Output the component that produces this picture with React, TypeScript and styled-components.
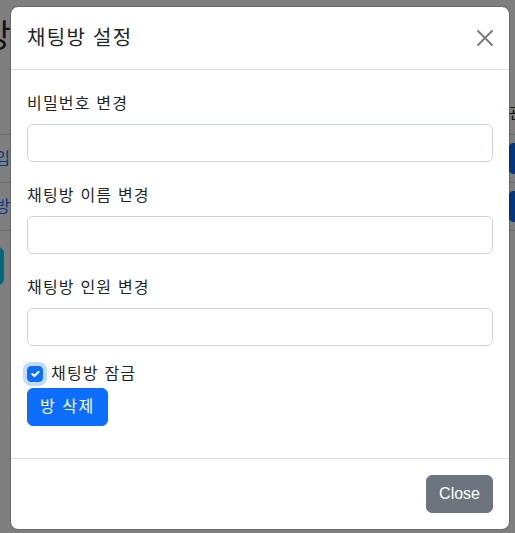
import React from 'react';
import styled, { createGlobalStyle } from 'styled-components';

const GlobalStyle = createGlobalStyle`
  html, body {
    margin: 0;
    padding: 0;
  }
  body {
    font-family: "Liberation Sans", "Noto Sans CJK KR", sans-serif;
    font-size: 16px;
    line-height: 1.5;
    color: #212529;
    background: #fff;
  }
  * {
    box-sizing: border-box;
  }
`;

const Page = styled.div`
  position: relative;
  width: 515px;
  height: 533px;
  overflow: hidden;
`;

// page behind the modal, only its edges show
const Behind = styled.div`
  padding-top: 17px;
`;

const EdgeLeft = styled.div<{ $w: number }>`
  width: ${p => p.$w}px;
  display: flex;
  justify-content: flex-end;
  white-space: nowrap;
`;

const EdgeRight = styled.div`
  width: 6px;
  white-space: nowrap;
`;

const PageTitle = styled.h1`
  margin: 0 0 32px;
  font-size: 32px;
  font-weight: 400;
  line-height: 1.2;
`;

const BgRow = styled.div<{ $head?: boolean }>`
  height: 48px;
  display: flex;
  align-items: center;
  justify-content: space-between;
  border-bottom: 1px solid #dee2e6;
  padding-top: ${p => (p.$head ? '6px' : '0')};
`;

const BgLink = styled.span`
  color: #0d6efd;
`;

const SmallBtn = styled.span`
  display: inline-block;
  padding: 4px 8px;
  font-size: 14px;
  line-height: 1.5;
  color: #fff;
  background: #0d6efd;
  border: 1px solid #0d6efd;
  border-radius: 4px;
`;

const InfoBtn = styled.span`
  display: inline-block;
  margin-top: 16px;
  padding: 6px 12px;
  color: #000;
  background: #0dcaf0;
  border: 1px solid #0dcaf0;
  border-radius: 6px;
`;

const Backdrop = styled.div`
  position: absolute;
  inset: 0;
  background: rgba(0, 0, 0, 0.5);
  padding: 6px 0 0 10px;
`;

const Modal = styled.div`
  width: 500px;
  background: #fff;
  background-clip: padding-box;
  border: 1px solid rgba(0, 0, 0, 0.175);
  border-radius: 8px;
`;

const Header = styled.div`
  display: flex;
  align-items: center;
  padding: 16px;
  border-bottom: 1px solid #dee2e6;
`;

const Title = styled.h5`
  margin: 0;
  font-size: 20px;
  font-weight: 400;
  line-height: 1.5;
  letter-spacing: 1.3px;
`;

const CloseX = styled.button`
  width: 32px;
  height: 32px;
  padding: 8px;
  margin: -8px -8px -8px auto;
  border: 0;
  background: transparent;
  opacity: 0.5;
  display: flex;
`;

const Body = styled.div`
  padding: 16px;
`;

const Field = styled.div`
  margin-bottom: 16px;
`;

const FieldLabel = styled.label`
  display: block;
  padding-top: 6px;
  margin-bottom: 8px;
  letter-spacing: 1.2px;
`;

const TextInput = styled.input`
  display: block;
  width: 100%;
  height: 38px;
  padding: 6px 12px;
  font: inherit;
  color: #212529;
  background: #fff;
  border: 1px solid #ced4da;
  border-radius: 6px;
  outline: none;
`;

const CheckRow = styled.label`
  display: flex;
  align-items: center;
  gap: 8px;
  min-height: 24px;
  margin-bottom: 2px;
  letter-spacing: 1.2px;
`;

const CheckBox = styled.span<{ $on: boolean }>`
  width: 16px;
  height: 16px;
  display: flex;
  border-radius: 4px;
  border: 1px solid ${p => (p.$on ? '#0d6efd' : '#ced4da')};
  background: ${p => (p.$on ? '#0d6efd' : '#fff')};
  box-shadow: 0 0 0 4px rgba(13, 110, 253, 0.25);
`;

const Actions = styled.div`
  margin-bottom: 16px;
`;

const Btn = styled.button<{ $tone: 'primary' | 'secondary' }>`
  padding: 6px 12px;
  font: inherit;
  line-height: 1.5;
  letter-spacing: ${p => (p.$tone === 'primary' ? '1.5px' : '0')};
  color: #fff;
  background: ${p => (p.$tone === 'primary' ? '#0d6efd' : '#6c757d')};
  border: 1px solid ${p => (p.$tone === 'primary' ? '#0d6efd' : '#6c757d')};
  border-radius: 6px;
`;

const Footer = styled.div`
  display: flex;
  justify-content: flex-end;
  padding: 12px;
  border-top: 1px solid #dee2e6;

  & > button {
    margin: 4px;
  }
`;

const fields = ['비밀번호 변경', '채팅방 이름 변경', '채팅방 인원 변경'];

const App: React.FC = () => {
  return (
    <Page>
      <GlobalStyle />
      <Behind>
        <EdgeLeft $w={11}>
          <PageTitle>채팅방</PageTitle>
        </EdgeLeft>
        <BgRow $head>
          <span />
          <EdgeRight>관리</EdgeRight>
        </BgRow>
        <BgRow>
          <EdgeLeft $w={10}>
            <BgLink>입</BgLink>
          </EdgeLeft>
          <EdgeRight>
            <SmallBtn>입장</SmallBtn>
          </EdgeRight>
        </BgRow>
        <BgRow>
          <EdgeLeft $w={10}>
            <BgLink>방</BgLink>
          </EdgeLeft>
          <EdgeRight>
            <SmallBtn>입장</SmallBtn>
          </EdgeRight>
        </BgRow>
        <EdgeLeft $w={4}>
          <InfoBtn>방 만들기</InfoBtn>
        </EdgeLeft>
      </Behind>

      <Backdrop>
        <Modal>
          <Header>
            <Title>채팅방 설정</Title>
            <CloseX aria-label="Close">
              <svg width="16" height="16" viewBox="0 0 16 16">
                <path
                  fill="#000"
                  d="M.293.293a1 1 0 0 1 1.414 0L8 6.586 14.293.293a1 1 0 1 1 1.414 1.414L9.414 8l6.293 6.293a1 1 0 0 1-1.414 1.414L8 9.414l-6.293 6.293a1 1 0 0 1-1.414-1.414L6.586 8 .293 1.707a1 1 0 0 1 0-1.414"
                />
              </svg>
            </CloseX>
          </Header>
          <Body>
            {fields.map(f => (
              <Field key={f}>
                <FieldLabel>{f}</FieldLabel>
                <TextInput type="text" />
              </Field>
            ))}
            <CheckRow>
              <CheckBox $on>
                <svg width="14" height="14" viewBox="0 0 20 20">
                  <path
                    d="m6 10 3 3 6-6"
                    fill="none"
                    stroke="#fff"
                    strokeWidth="3"
                    strokeLinecap="round"
                    strokeLinejoin="round"
                  />
                </svg>
              </CheckBox>
              채팅방 잠금
            </CheckRow>
            <Actions>
              <Btn $tone="primary">방 삭제</Btn>
            </Actions>
          </Body>
          <Footer>
            <Btn $tone="secondary">Close</Btn>
          </Footer>
        </Modal>
      </Backdrop>
    </Page>
  );
};

export default App;
